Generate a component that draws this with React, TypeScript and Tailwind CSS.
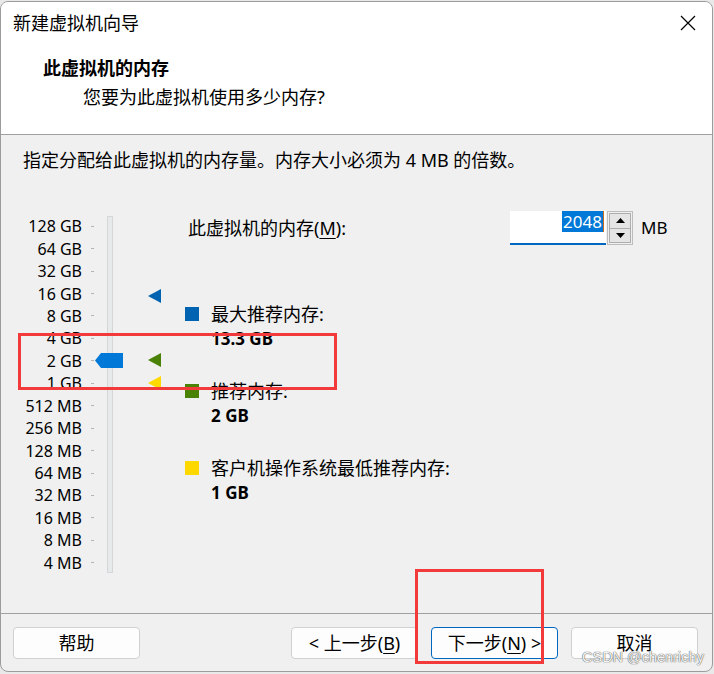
import React from "react"

const font = "font-['Noto_Sans','Noto_Sans_CJK_SC',sans-serif]"

const scale = [
  "128 GB", "64 GB", "32 GB", "16 GB", "8 GB", "4 GB", "2 GB", "1 GB",
  "512 MB", "256 MB", "128 MB", "64 MB", "32 MB", "16 MB", "8 MB", "4 MB",
]

const legend = [
  { color: "bg-[#0063b1]", title: "最大推荐内存:", value: "13.3 GB" },
  { color: "bg-[#498205]", title: "推荐内存:", value: "2 GB" },
  { color: "bg-[#ffd800]", title: "客户机操作系统最低推荐内存:", value: "1 GB" },
]

function Marker({ color, top }: { color: string; top: string }) {
  return (
    <svg className={`absolute left-[147px] ${top}`} width="13" height="14" viewBox="0 0 13 14">
      <polygon points="0,7 13,0 13,14" fill={color} />
    </svg>
  )
}

function Spinner() {
  return (
    <div className="ml-[1px] flex h-[34px] w-[26px] flex-col border border-[#bcbcbc] bg-[#f0f0f0] p-px">
      <div className="flex flex-1 items-center justify-center border border-[#adadad] bg-[#e5e5e5]">
        <svg width="9" height="5" viewBox="0 0 9 5">
          <polygon points="4.5,0 9,5 0,5" fill="#000" />
        </svg>
      </div>
      <div className="flex flex-1 items-center justify-center border border-t-0 border-[#adadad] bg-[#e5e5e5]">
        <svg width="9" height="5" viewBox="0 0 9 5">
          <polygon points="0,0 9,0 4.5,5" fill="#000" />
        </svg>
      </div>
    </div>
  )
}

export default function App() {
  return (
    <div className={`relative h-[674px] w-[714px] overflow-hidden bg-[#e9e9e9] pt-[1px] text-[18px] text-black ${font}`}>
      <div className="h-[671px] w-[713px] overflow-hidden rounded-[8px] border border-[#9c9c9c] bg-[#f0f0f0]">
        {/* header */}
        <div className="h-[133px] border-b border-[#a0a0a0] bg-white">
          <div className="flex h-[42px] items-center justify-between pl-[12px] pr-[16px]">
            <span className="leading-[26px]">新建虚拟机向导</span>
            <svg width="16" height="16" viewBox="0 0 16 16">
              <path d="M1 1 L15 15 M15 1 L1 15" stroke="#000" strokeWidth="1.2" />
            </svg>
          </div>
          <div className="mt-[11px] pl-[42px] font-bold leading-[26px]">此虚拟机的内存</div>
          <div className="mt-[3px] pl-[82px] leading-[26px]">您要为此虚拟机使用多少内存?</div>
        </div>

        {/* body */}
        <div className="h-[479px] border-b border-[#a0a0a0] pl-[22px] pt-[12px]">
          <p className="leading-[26px]">
            指定分配给此虚拟机的内存量。内存大小必须为 4 MB 的倍数。
          </p>

          <div className="-ml-[22px] mt-[38px] flex">
            {/* slider */}
            <div className="relative mt-[3px] flex h-[360px] w-[184px]">
              <div className="flex flex-col pt-[1px]">
                {scale.map((s) => (
                  <div key={s} className="flex h-[22.65px] items-center">
                    <span className="w-[81px] text-right text-[16px] leading-none">{s}</span>
                    <span className="ml-[9px] h-px w-[3px] bg-[#b4b4b4]" />
                  </div>
                ))}
              </div>
              <div className="ml-[13px] mt-[2px] h-[357px] w-[6px] border border-[#d6d6d6] bg-[#e7eaea]" />

              <svg className="absolute left-[94px] top-[139px]" width="28" height="15" viewBox="0 0 28 15">
                <polygon points="0,7.5 6,0 28,0 28,15 6,15" fill="#0078d7" />
              </svg>
              <Marker color="#0063b1" top="top-[75px]" />
              <Marker color="#498205" top="top-[139px]" />
              <Marker color="#ffd800" top="top-[162px]" />
            </div>

            {/* right column */}
            <div className="flex flex-col">
              <div className="flex h-[34px] items-center">
                <span className="w-[325px] pl-[3px] leading-[26px]">
                  此虚拟机的内存(<span className="underline underline-offset-[3px]">M</span>):
                </span>
                <div className="flex h-[34px] w-[96px] items-start justify-end border-b-2 border-[#0067c0] bg-white pr-[2px]">
                  <span className="h-[21px] bg-[#0078d7] px-[1px] text-[17px] leading-[21px] text-white">2048</span>
                  <span className="h-[21px] w-px bg-[#c86a1e]" />
                </div>
                <Spinner />
                <span className="ml-[8px] text-[17px] leading-[26px]">MB</span>
              </div>

              <div className="mt-[57px] flex flex-col gap-[27px]">
                {legend.map((l) => (
                  <div key={l.title}>
                    <div className="flex h-[24px] items-center">
                      <span className={`h-[14px] w-[14px] ${l.color}`} />
                      <span className="ml-[12px] leading-[24px]">{l.title}</span>
                    </div>
                    <div className="pl-[26px] text-[17px] font-bold leading-[26px]">{l.value}</div>
                  </div>
                ))}
              </div>
            </div>
          </div>
        </div>

        {/* footer */}
        <div className="flex h-[57px] items-start pl-[12px] pr-[14px] pt-[13px]">
          <button className="h-[32px] w-[127px] rounded-[4px] border border-[#d0d0d0] bg-[#fdfdfd] leading-[26px]">
            帮助
          </button>
          <div className="flex-1" />
          <button className="h-[32px] w-[127px] rounded-[4px] border border-[#d0d0d0] bg-[#fdfdfd] leading-[26px]">
            &lt; 上一步(<span className="underline underline-offset-[3px]">B</span>)
          </button>
          <button className="ml-[13px] h-[32px] w-[127px] rounded-[4px] border border-[#0067c0] bg-[#fdfdfd] leading-[26px]">
            下一步(<span className="underline underline-offset-[3px]">N</span>) &gt;
          </button>
          <button className="ml-[13px] h-[32px] w-[127px] rounded-[4px] border border-[#d0d0d0] bg-[#fdfdfd] leading-[26px]">
            取消
          </button>
        </div>
      </div>

      {/* annotation overlays */}
      <div className="pointer-events-none absolute left-[18px] top-[333px] h-[57px] w-[319px] border-[3px] border-[#f23a3a]" />
      <div className="pointer-events-none absolute left-[415px] top-[569px] h-[95px] w-[129px] border-[3px] border-[#f23a3a]" />
      <div className="pointer-events-none absolute left-[582px] top-[647px] font-['Liberation_Sans',sans-serif] text-[14.5px] leading-[20px] text-[#f4f4f4] [text-shadow:0_0_1px_#555,0_0_1px_#555]">
        CSDN @chenrichy
      </div>
    </div>
  )
}
